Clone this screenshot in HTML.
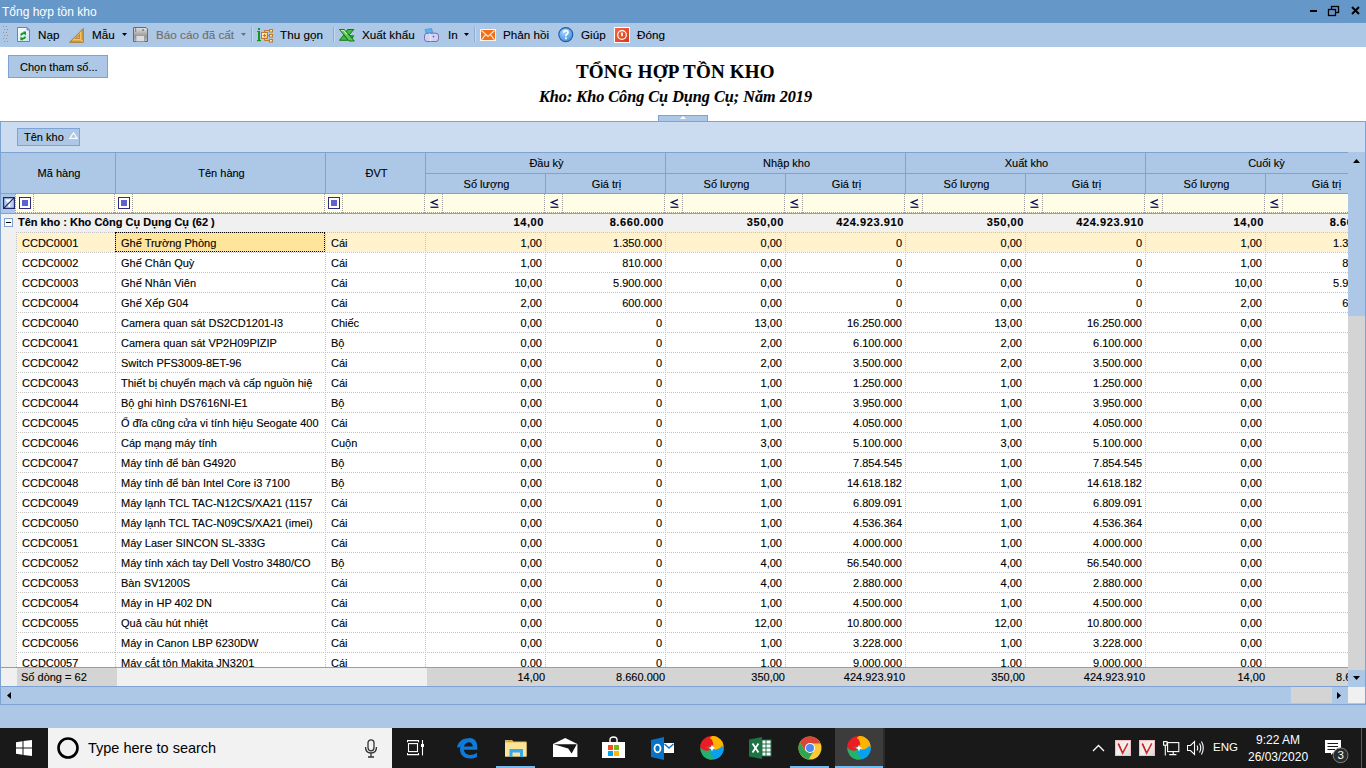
<!DOCTYPE html><html><head><meta charset="utf-8"><style>
*{margin:0;padding:0;box-sizing:border-box}
body{-webkit-text-stroke:0.12px currentColor}
html,body{width:1366px;height:768px;overflow:hidden;background:#adc8e6;font-family:"Liberation Sans",sans-serif;position:relative}
.a{position:absolute}
.t{position:absolute;white-space:nowrap;line-height:1}
#title{left:0;top:0;width:1366px;height:23px;background:#6697c9}
#tool{left:0;top:23px;width:1366px;height:24px;background:#adc8e6}
#white{left:0;top:47px;width:1366px;height:74px;background:#fff}
.tb{font-size:11.7px;color:#000;top:29px}
.tbd{color:#6d6d6d}
.sep{position:absolute;top:27px;width:2px;height:15px;background:#8aaad8;border-right:1px solid #c4d8ee}
#btn{left:8px;top:55px;width:100px;height:23px;background:#adc8e6;border:1px solid #7ea2d2}
#gp{left:0;top:121px;width:1366px;height:31px;background:#cbdcf0;border-top:1px solid #7ea2d2;border-left:1px solid #7ea2d2;border-right:1px solid #7ea2d2}
#chip{left:17px;top:128px;width:63px;height:18px;background:#adc8e6;border:1px solid #7ea2d2}
#hdr{left:0;top:152px;width:1348px;height:42px;background:#adc8e6;border-top:1px solid #7ea2d2;border-bottom:1px solid #7ea2d2;border-left:1px solid #7ea2d2;overflow:hidden}
.vl{position:absolute;width:1px;background:#7ea2d2}
.hl{position:absolute;height:1px;background:#7ea2d2}
.ht{position:absolute;font-size:11px;color:#000;text-align:center;white-space:nowrap;line-height:1;padding-left:3px}
#flt{left:0;top:194px;width:1348px;height:19px;background:#fffde6;overflow:hidden}
#gdata{position:absolute;left:0;top:213px;width:1348px;height:454px;overflow:hidden;background:#f0f0f0;border-top:1px solid #7ea2d2}
.grow{position:absolute;left:0;width:1348px;height:18px;background:#f0f0f0}
.gexp{position:absolute;left:4px;top:4px;width:9px;height:9px;border:1px solid #7ea2d2;background:#fff}
.gexp:after{content:"";position:absolute;left:1px;top:3px;width:5px;height:1px;background:#000}
.gtxt{position:absolute;left:18px;top:3px;font-size:11px;font-weight:bold;color:#000;white-space:nowrap;line-height:1}
.gnum{position:absolute;top:3px;font-size:11px;font-weight:bold;color:#000;text-align:right;padding-right:1px;white-space:nowrap;line-height:1;letter-spacing:0.6px}
.row{position:absolute;left:16px;width:1400px;height:20px;background:#fff}
.row.foc{background:#fff2cc}
.c{position:absolute;top:0;height:20px;font-size:11px;color:#000;white-space:nowrap;overflow:hidden;line-height:1;padding-top:5.5px;
 background-image:linear-gradient(to right,#c2c2c2 50%,transparent 50%),linear-gradient(to bottom,#c2c2c2 50%,transparent 50%);
 background-size:2px 1px,1px 2px;background-repeat:repeat-x,repeat-y;background-position:0 0,0 0}
.c.txt{padding-left:6px}
.c.num{text-align:right;padding-right:3px}
.c.fcell{background-color:#ffe49c;outline:1px dotted #000;outline-offset:-1px}
#foot{left:0;top:667px;width:1348px;height:20px;background:#d4d4d4;border-top:1px solid #7ea2d2;border-bottom:1px solid #7ea2d2;border-left:1px solid #7ea2d2}
#vs{left:1348px;top:152px;width:17px;height:535px;background:#d4d4d4}
#hs{left:0;top:687px;width:1366px;height:18px;background:#adc8e6;border-left:1px solid #7ea2d2;border-right:1px solid #7ea2d2;border-bottom:1px solid #7ea2d2}
#task{left:0;top:728px;width:1366px;height:40px;background:#191919}
#search{left:48px;top:728px;width:344px;height:40px;background:#f2f2f2}
.fd{position:absolute;top:0;width:1px;height:19px;background-image:linear-gradient(to bottom,#9a9a9a 50%,transparent 50%);background-size:1px 2px}
.fdh{position:absolute;left:15px;top:18px;width:1400px;height:1px;background-image:linear-gradient(to right,#9a9a9a 50%,transparent 50%);background-size:2px 1px}
.fle{position:absolute;top:5px}
.fnum{position:absolute;top:4px;font-size:11px;color:#000;text-align:right;padding-right:0px;white-space:nowrap;line-height:1}

.ns{-webkit-text-stroke:0}

</style></head><body>
<div id="title" class="a"></div>
<div class="t ns" style="left:2px;top:6px;font-size:12px;color:#fff">Tổng hợp tồn kho</div>
<div class="a" style="left:1310px;top:10px;width:7px;height:2px;background:#000"></div>
<svg class="a" style="left:1327px;top:5px" width="13" height="12" viewBox="0 0 13 12"><rect x="4.5" y="1.5" width="7" height="6" fill="none" stroke="#000" stroke-width="1.3"/><rect x="1.5" y="4.5" width="7" height="6" fill="#6697c9" stroke="#000" stroke-width="1.3"/></svg>
<svg class="a" style="left:1351px;top:6px" width="9" height="9" viewBox="0 0 9 9"><path d="M1 1L8 8M8 1L1 8" stroke="#000" stroke-width="2"/></svg>

<div id="tool" class="a"></div>
<svg class="a" style="left:3px;top:25px" width="6" height="20" viewBox="0 0 6 20"><g fill="#9a8f86"><rect x="0" y="1" width="1" height="1"/><rect x="3" y="1" width="1" height="1"/><rect x="1" y="4" width="1" height="1"/><rect x="4" y="4" width="1" height="1"/><rect x="0" y="7" width="1" height="1"/><rect x="3" y="7" width="1" height="1"/><rect x="1" y="10" width="1" height="1"/><rect x="4" y="10" width="1" height="1"/><rect x="0" y="13" width="1" height="1"/><rect x="3" y="13" width="1" height="1"/><rect x="1" y="16" width="1" height="1"/><rect x="4" y="16" width="1" height="1"/></g></svg>
<!-- Nap icon -->
<svg class="a" style="left:17px;top:27px" width="13" height="15" viewBox="0 0 13 15"><defs><linearGradient id="ng" x1="0" y1="0" x2="1" y2="1"><stop offset="0" stop-color="#ffffff"/><stop offset="1" stop-color="#c4e2fa"/></linearGradient></defs><path d="M0.5 0.5H10L12.5 3V14.5H0.5Z" fill="url(#ng)" stroke="#767cab"/><path d="M10 0.5V3H12.5" fill="#5aa8e8" stroke="#767cab" stroke-width="0.8"/><g transform="translate(6.3 8.8) scale(0.82) translate(-6.3 -8.8)"><path d="M2.6 8.2C3 5.6 4.6 4.6 7 4.6H7.3L6.3 3.6H9.5V8.4L8.3 7.2C6.8 6.7 5 7 4.4 8.7Z" fill="#0d960d"/><path d="M9.6 10C9.2 12.4 7.8 13.2 5.5 13.2H5.2L6.2 14.2H2.8V9.6L4.1 10.8C5.6 11.3 7.3 11.2 7.9 9.4Z" fill="#0d960d"/></g></svg>
<div class="t tb" style="left:38px">Nạp</div>
<!-- set square -->
<svg class="a" style="left:69px;top:28px" width="15" height="15" viewBox="0 0 15 15"><path d="M0.5 14.3H14.3V0.5Z" fill="#f2c25c" stroke="#a86e28" stroke-width="0.9"/><path d="M5.2 11H11V5.2Z" fill="#c48a3c"/><path d="M8 10H10V8Z" fill="#adc8e6"/><g fill="#9a6420"><rect x="2.5" y="12.6" width="1" height="1.2"/><rect x="4.5" y="12.6" width="1" height="1.2"/><rect x="6.5" y="12.6" width="1" height="1.2"/><rect x="8.5" y="12.6" width="1" height="1.2"/><rect x="10.5" y="12.6" width="1" height="1.2"/><rect x="12.6" y="2.5" width="1.2" height="1"/><rect x="12.6" y="4.5" width="1.2" height="1"/><rect x="12.6" y="6.5" width="1.2" height="1"/><rect x="12.6" y="8.5" width="1.2" height="1"/><rect x="12.6" y="10.5" width="1.2" height="1"/></g></svg>
<div class="t tb" style="left:92px">Mẫu</div>
<svg class="a" style="left:122px;top:33px" width="5" height="3" viewBox="0 0 5 3"><path d="M0 0H5L2.5 3Z" fill="#000"/></svg>
<!-- floppy -->
<svg class="a" style="left:133px;top:27px" width="15" height="15" viewBox="0 0 15 15"><defs><linearGradient id="fg" x1="0" y1="0" x2="0" y2="1"><stop offset="0" stop-color="#e4e4e4"/><stop offset="0.6" stop-color="#9a9a9a"/><stop offset="1" stop-color="#b0b0b0"/></linearGradient></defs><path d="M0.5 0.5H13L14.5 2V14.5H0.5Z" fill="url(#fg)" stroke="#6a6a6a"/><rect x="2" y="1" width="1.2" height="4" fill="#8a8a8a"/><circle cx="10" cy="3" r="1" fill="#7a7a7a"/><rect x="3" y="8.5" width="8.5" height="6" fill="#dcdcdc" stroke="#8a8a8a" stroke-width="0.6"/><circle cx="1.8" cy="13.2" r="0.7" fill="#adc8e6"/><circle cx="12.8" cy="13.2" r="0.7" fill="#adc8e6"/></svg>
<div class="t tb tbd" style="left:156px">Báo cáo đã cất</div>
<svg class="a" style="left:241px;top:33px" width="5" height="3" viewBox="0 0 5 3"><path d="M0 0H5L2.5 3Z" fill="#707070"/></svg>
<div class="sep" style="left:251px"></div>
<!-- thu gon icon -->
<svg class="a" style="left:257px;top:28px" width="16" height="15" viewBox="0 0 16 15"><rect x="1" y="0" width="2" height="2" fill="#159615"/><path d="M0 3H3V12H4V13.2H0V12H1V4H0Z" fill="#159615"/><defs><linearGradient id="tg" x1="0" y1="0" x2="1" y2="1"><stop offset="0" stop-color="#fffbd8"/><stop offset="1" stop-color="#f5c250"/></linearGradient></defs><path d="M7.5 4.5V2.5H12.5M10.5 7.5H12.5M7.5 10.5V12.5H12.5" stroke="#c07a30" fill="none"/><rect x="4.5" y="4.5" width="6" height="6" fill="url(#tg)" stroke="#c07a30"/><path d="M7.5 6V9M6 7.5H9" stroke="#c07a30"/><g fill="#fde7a0" stroke="#c07a30"><rect x="12.5" y="1.5" width="3" height="2.5"/><rect x="12.5" y="6.5" width="3" height="2.5"/><rect x="12.5" y="11.5" width="3" height="2.5"/></g></svg>
<div class="t tb" style="left:280px">Thu gọn</div>
<div class="sep" style="left:333px"></div>
<!-- excel -->
<svg class="a" style="left:339px;top:29px" width="16" height="13" viewBox="0 0 16 13"><g fill="#3cbf3c" stroke="#0b6a0b" stroke-width="0.9" stroke-linejoin="round"><path d="M8.6 0.5H14.8L9.8 6.2L7.2 3.4Z"/><path d="M0.5 11.3L4.6 6.2L7.8 9.4L8.6 11.3Z"/><path d="M10.6 6.8H14.6L13 9.6Z"/><path d="M0.5 0.5H5.3L15.3 12H10Z" fill="#56cc56"/></g><path d="M2 1.5H4.6L8 5.4" stroke="#cff5b0" stroke-width="1.1" fill="none"/></svg>
<div class="t tb" style="left:362px">Xuất khẩu</div>
<!-- printer -->
<svg class="a" style="left:424px;top:28px" width="15" height="14" viewBox="0 0 15 14"><path d="M1 1.5L7.5 0.5L8.8 4.8L2.4 6Z" fill="#58b4f0" stroke="#3a8ad8" stroke-width="0.6"/><path d="M0.5 8Q0.5 5.2 3 5.2H12Q14.5 5.2 14.5 8V10.8Q14.5 13.5 12 13.5H3Q0.5 13.5 0.5 10.8Z" fill="#d2d0f4" stroke="#6c68a8" stroke-width="0.9"/><path d="M5.5 5.5Q7.5 9 6.5 13.3" stroke="#f0f0ff" stroke-width="0.9" fill="none"/><circle cx="9.5" cy="8.6" r="0.8" fill="#55558a"/></svg>
<div class="t tb" style="left:448px">In</div>
<svg class="a" style="left:464px;top:33px" width="5" height="3" viewBox="0 0 5 3"><path d="M0 0H5L2.5 3Z" fill="#000"/></svg>
<div class="sep" style="left:474px"></div>
<!-- mail -->
<svg class="a" style="left:480px;top:29px" width="16" height="12" viewBox="0 0 16 12"><rect x="0" y="0" width="16" height="12" fill="#fff4ea"/><rect x="1" y="1" width="14" height="10" fill="#f26e16"/><path d="M1.5 1.5L8 7.4L14.5 1.5M1.5 10.8L5.6 5.6M14.5 10.8L10.4 5.6" stroke="#fde6d0" stroke-width="1.1" fill="none"/></svg>
<div class="t tb" style="left:503px">Phản hồi</div>
<!-- help -->
<svg class="a" style="left:558px;top:27px" width="16" height="16" viewBox="0 0 16 16"><defs><radialGradient id="hg" cx="0.4" cy="0.3" r="0.8"><stop offset="0" stop-color="#a8d8fc"/><stop offset="1" stop-color="#3a86d8"/></radialGradient></defs><circle cx="7.8" cy="7.6" r="7" fill="url(#hg)" stroke="#1c5ca8" stroke-width="1.1"/><path d="M5.7 5.6Q5.9 3.6 7.9 3.6Q10 3.6 10 5.4Q10 6.6 8.7 7.3Q7.9 7.8 7.9 9.2" stroke="#fff" stroke-width="1.6" fill="none"/><rect x="7" y="10.4" width="1.8" height="1.8" fill="#fff"/></svg>
<div class="t tb" style="left:581px">Giúp</div>
<!-- power -->
<svg class="a" style="left:614px;top:27px" width="16" height="16" viewBox="0 0 16 16"><rect x="0" y="0" width="16" height="16" fill="#fff"/><defs><linearGradient id="pg" x1="0" y1="0" x2="1" y2="1"><stop offset="0" stop-color="#f46848"/><stop offset="1" stop-color="#d83810"/></linearGradient></defs><rect x="1" y="1" width="14" height="14" fill="url(#pg)"/><circle cx="8" cy="8" r="4.3" fill="none" stroke="#fff" stroke-width="1.2"/><rect x="7.1" y="5.6" width="1.8" height="3.6" fill="#fff"/></svg>
<div class="t tb" style="left:637px">Đóng</div>

<div id="white" class="a"></div>
<div id="btn" class="a"></div>
<div class="t" style="left:20px;top:62px;font-size:11px;color:#000">Chọn tham số...</div>
<div class="t" style="left:576px;top:61px;font:bold 19px 'Liberation Serif';letter-spacing:0.2px;color:#000">TỔNG HỢP TỒN KHO</div>
<div class="t" style="left:539px;top:88px;font:italic bold 16.2px 'Liberation Serif';color:#000">Kho: Kho Công Cụ Dụng Cụ; Năm 2019</div>

<div id="gp" class="a"></div>
<div class="a" style="left:658px;top:115px;width:50px;height:7px;background:#adc8e6;border:1px solid #7ea2d2"></div>
<svg class="a" style="left:680px;top:116px" width="6" height="3" viewBox="0 0 6 3"><path d="M0 3L3 0L6 3Z" fill="#fff"/></svg>
<div id="chip" class="a"></div>
<div class="t" style="left:24px;top:132px;font-size:11px;color:#000">Tên kho</div>
<svg class="a" style="left:69px;top:132px" width="9" height="7" viewBox="0 0 9 7"><path d="M4.5 0.8L8.2 6.4H0.8Z" fill="none" stroke="#fff" stroke-width="1.1"/></svg>

<div id="hdr" class="a">
 <div class="vl" style="left:114px;top:0;height:41px"></div>
 <div class="vl" style="left:324px;top:0;height:41px"></div>
 <div class="vl" style="left:424px;top:0;height:41px"></div>
 <div class="vl" style="left:664px;top:0;height:41px"></div>
 <div class="vl" style="left:904px;top:0;height:41px"></div>
 <div class="vl" style="left:1144px;top:0;height:41px"></div>
 <div class="vl" style="left:544px;top:20px;height:21px"></div>
 <div class="vl" style="left:784px;top:20px;height:21px"></div>
 <div class="vl" style="left:1024px;top:20px;height:21px"></div>
 <div class="vl" style="left:1264px;top:20px;height:21px"></div>
 <div class="hl" style="left:424px;top:20px;width:1000px"></div>
 <div class="ht" style="left:-1px;top:15px;width:115px">Mã hàng</div>
 <div class="ht" style="left:114px;top:15px;width:210px">Tên hàng</div>
 <div class="ht" style="left:324px;top:15px;width:100px">ĐVT</div>
 <div class="ht" style="left:424px;top:5px;width:240px">Đầu kỳ</div>
 <div class="ht" style="left:664px;top:5px;width:240px">Nhập kho</div>
 <div class="ht" style="left:904px;top:5px;width:240px">Xuất kho</div>
 <div class="ht" style="left:1144px;top:5px;width:240px">Cuối kỳ</div>
 <div class="ht" style="left:424px;top:26px;width:120px">Số lượng</div>
 <div class="ht" style="left:544px;top:26px;width:120px">Giá trị</div>
 <div class="ht" style="left:664px;top:26px;width:120px">Số lượng</div>
 <div class="ht" style="left:784px;top:26px;width:120px">Giá trị</div>
 <div class="ht" style="left:904px;top:26px;width:120px">Số lượng</div>
 <div class="ht" style="left:1024px;top:26px;width:120px">Giá trị</div>
 <div class="ht" style="left:1144px;top:26px;width:120px">Số lượng</div>
 <div class="ht" style="left:1264px;top:26px;width:120px">Giá trị</div>
</div>

<div id="gdata">
<div class="grow" style="top:0px">
<div class="gexp"></div><div class="gtxt">Tên kho : Kho Công Cụ Dụng Cụ (62 )</div>
<div class="gnum" style="left:425px;width:120px">14,00</div>
<div class="gnum" style="left:545px;width:120px">8.660.000</div>
<div class="gnum" style="left:665px;width:120px">350,00</div>
<div class="gnum" style="left:785px;width:120px">424.923.910</div>
<div class="gnum" style="left:905px;width:120px">350,00</div>
<div class="gnum" style="left:1025px;width:120px">424.923.910</div>
<div class="gnum" style="left:1145px;width:120px">14,00</div>
<div class="gnum" style="left:1265px;width:120px">8.660.000</div>
</div>
<div class="row foc" style="top:18px">
<div class="c txt" style="left:0px;width:99px">CCDC0001</div>
<div class="c txt fcell" style="left:99px;width:210px">Ghế Trường Phòng</div>
<div class="c txt" style="left:309px;width:100px">Cái</div>
<div class="c num" style="left:409px;width:120px">1,00</div>
<div class="c num" style="left:529px;width:120px">1.350.000</div>
<div class="c num" style="left:649px;width:120px">0,00</div>
<div class="c num" style="left:769px;width:120px">0</div>
<div class="c num" style="left:889px;width:120px">0,00</div>
<div class="c num" style="left:1009px;width:120px">0</div>
<div class="c num" style="left:1129px;width:120px">1,00</div>
<div class="c num" style="left:1249px;width:120px">1.350.000</div>
</div>
<div class="row" style="top:38px">
<div class="c txt" style="left:0px;width:99px">CCDC0002</div>
<div class="c txt" style="left:99px;width:210px">Ghế Chân Quỳ</div>
<div class="c txt" style="left:309px;width:100px">Cái</div>
<div class="c num" style="left:409px;width:120px">1,00</div>
<div class="c num" style="left:529px;width:120px">810.000</div>
<div class="c num" style="left:649px;width:120px">0,00</div>
<div class="c num" style="left:769px;width:120px">0</div>
<div class="c num" style="left:889px;width:120px">0,00</div>
<div class="c num" style="left:1009px;width:120px">0</div>
<div class="c num" style="left:1129px;width:120px">1,00</div>
<div class="c num" style="left:1249px;width:120px">810.000</div>
</div>
<div class="row" style="top:58px">
<div class="c txt" style="left:0px;width:99px">CCDC0003</div>
<div class="c txt" style="left:99px;width:210px">Ghế Nhân Viên</div>
<div class="c txt" style="left:309px;width:100px">Cái</div>
<div class="c num" style="left:409px;width:120px">10,00</div>
<div class="c num" style="left:529px;width:120px">5.900.000</div>
<div class="c num" style="left:649px;width:120px">0,00</div>
<div class="c num" style="left:769px;width:120px">0</div>
<div class="c num" style="left:889px;width:120px">0,00</div>
<div class="c num" style="left:1009px;width:120px">0</div>
<div class="c num" style="left:1129px;width:120px">10,00</div>
<div class="c num" style="left:1249px;width:120px">5.900.000</div>
</div>
<div class="row" style="top:78px">
<div class="c txt" style="left:0px;width:99px">CCDC0004</div>
<div class="c txt" style="left:99px;width:210px">Ghế Xếp G04</div>
<div class="c txt" style="left:309px;width:100px">Cái</div>
<div class="c num" style="left:409px;width:120px">2,00</div>
<div class="c num" style="left:529px;width:120px">600.000</div>
<div class="c num" style="left:649px;width:120px">0,00</div>
<div class="c num" style="left:769px;width:120px">0</div>
<div class="c num" style="left:889px;width:120px">0,00</div>
<div class="c num" style="left:1009px;width:120px">0</div>
<div class="c num" style="left:1129px;width:120px">2,00</div>
<div class="c num" style="left:1249px;width:120px">600.000</div>
</div>
<div class="row" style="top:98px">
<div class="c txt" style="left:0px;width:99px">CCDC0040</div>
<div class="c txt" style="left:99px;width:210px">Camera quan sát DS2CD1201-I3</div>
<div class="c txt" style="left:309px;width:100px">Chiếc</div>
<div class="c num" style="left:409px;width:120px">0,00</div>
<div class="c num" style="left:529px;width:120px">0</div>
<div class="c num" style="left:649px;width:120px">13,00</div>
<div class="c num" style="left:769px;width:120px">16.250.000</div>
<div class="c num" style="left:889px;width:120px">13,00</div>
<div class="c num" style="left:1009px;width:120px">16.250.000</div>
<div class="c num" style="left:1129px;width:120px">0,00</div>
<div class="c num" style="left:1249px;width:120px">0</div>
</div>
<div class="row" style="top:118px">
<div class="c txt" style="left:0px;width:99px">CCDC0041</div>
<div class="c txt" style="left:99px;width:210px">Camera quan sát VP2H09PIZIP</div>
<div class="c txt" style="left:309px;width:100px">Bộ</div>
<div class="c num" style="left:409px;width:120px">0,00</div>
<div class="c num" style="left:529px;width:120px">0</div>
<div class="c num" style="left:649px;width:120px">2,00</div>
<div class="c num" style="left:769px;width:120px">6.100.000</div>
<div class="c num" style="left:889px;width:120px">2,00</div>
<div class="c num" style="left:1009px;width:120px">6.100.000</div>
<div class="c num" style="left:1129px;width:120px">0,00</div>
<div class="c num" style="left:1249px;width:120px">0</div>
</div>
<div class="row" style="top:138px">
<div class="c txt" style="left:0px;width:99px">CCDC0042</div>
<div class="c txt" style="left:99px;width:210px">Switch PFS3009-8ET-96</div>
<div class="c txt" style="left:309px;width:100px">Cái</div>
<div class="c num" style="left:409px;width:120px">0,00</div>
<div class="c num" style="left:529px;width:120px">0</div>
<div class="c num" style="left:649px;width:120px">2,00</div>
<div class="c num" style="left:769px;width:120px">3.500.000</div>
<div class="c num" style="left:889px;width:120px">2,00</div>
<div class="c num" style="left:1009px;width:120px">3.500.000</div>
<div class="c num" style="left:1129px;width:120px">0,00</div>
<div class="c num" style="left:1249px;width:120px">0</div>
</div>
<div class="row" style="top:158px">
<div class="c txt" style="left:0px;width:99px">CCDC0043</div>
<div class="c txt" style="left:99px;width:210px">Thiết bị chuyển mạch và cấp nguồn hiệ</div>
<div class="c txt" style="left:309px;width:100px">Cái</div>
<div class="c num" style="left:409px;width:120px">0,00</div>
<div class="c num" style="left:529px;width:120px">0</div>
<div class="c num" style="left:649px;width:120px">1,00</div>
<div class="c num" style="left:769px;width:120px">1.250.000</div>
<div class="c num" style="left:889px;width:120px">1,00</div>
<div class="c num" style="left:1009px;width:120px">1.250.000</div>
<div class="c num" style="left:1129px;width:120px">0,00</div>
<div class="c num" style="left:1249px;width:120px">0</div>
</div>
<div class="row" style="top:178px">
<div class="c txt" style="left:0px;width:99px">CCDC0044</div>
<div class="c txt" style="left:99px;width:210px">Bộ ghi hình DS7616NI-E1</div>
<div class="c txt" style="left:309px;width:100px">Bộ</div>
<div class="c num" style="left:409px;width:120px">0,00</div>
<div class="c num" style="left:529px;width:120px">0</div>
<div class="c num" style="left:649px;width:120px">1,00</div>
<div class="c num" style="left:769px;width:120px">3.950.000</div>
<div class="c num" style="left:889px;width:120px">1,00</div>
<div class="c num" style="left:1009px;width:120px">3.950.000</div>
<div class="c num" style="left:1129px;width:120px">0,00</div>
<div class="c num" style="left:1249px;width:120px">0</div>
</div>
<div class="row" style="top:198px">
<div class="c txt" style="left:0px;width:99px">CCDC0045</div>
<div class="c txt" style="left:99px;width:210px">Ổ đĩa cũng cửa vi tính hiệu Seogate 400</div>
<div class="c txt" style="left:309px;width:100px">Cái</div>
<div class="c num" style="left:409px;width:120px">0,00</div>
<div class="c num" style="left:529px;width:120px">0</div>
<div class="c num" style="left:649px;width:120px">1,00</div>
<div class="c num" style="left:769px;width:120px">4.050.000</div>
<div class="c num" style="left:889px;width:120px">1,00</div>
<div class="c num" style="left:1009px;width:120px">4.050.000</div>
<div class="c num" style="left:1129px;width:120px">0,00</div>
<div class="c num" style="left:1249px;width:120px">0</div>
</div>
<div class="row" style="top:218px">
<div class="c txt" style="left:0px;width:99px">CCDC0046</div>
<div class="c txt" style="left:99px;width:210px">Cáp mạng máy tính</div>
<div class="c txt" style="left:309px;width:100px">Cuộn</div>
<div class="c num" style="left:409px;width:120px">0,00</div>
<div class="c num" style="left:529px;width:120px">0</div>
<div class="c num" style="left:649px;width:120px">3,00</div>
<div class="c num" style="left:769px;width:120px">5.100.000</div>
<div class="c num" style="left:889px;width:120px">3,00</div>
<div class="c num" style="left:1009px;width:120px">5.100.000</div>
<div class="c num" style="left:1129px;width:120px">0,00</div>
<div class="c num" style="left:1249px;width:120px">0</div>
</div>
<div class="row" style="top:238px">
<div class="c txt" style="left:0px;width:99px">CCDC0047</div>
<div class="c txt" style="left:99px;width:210px">Máy tính để bàn G4920</div>
<div class="c txt" style="left:309px;width:100px">Bộ</div>
<div class="c num" style="left:409px;width:120px">0,00</div>
<div class="c num" style="left:529px;width:120px">0</div>
<div class="c num" style="left:649px;width:120px">1,00</div>
<div class="c num" style="left:769px;width:120px">7.854.545</div>
<div class="c num" style="left:889px;width:120px">1,00</div>
<div class="c num" style="left:1009px;width:120px">7.854.545</div>
<div class="c num" style="left:1129px;width:120px">0,00</div>
<div class="c num" style="left:1249px;width:120px">0</div>
</div>
<div class="row" style="top:258px">
<div class="c txt" style="left:0px;width:99px">CCDC0048</div>
<div class="c txt" style="left:99px;width:210px">Máy tính để bàn Intel Core i3 7100</div>
<div class="c txt" style="left:309px;width:100px">Bộ</div>
<div class="c num" style="left:409px;width:120px">0,00</div>
<div class="c num" style="left:529px;width:120px">0</div>
<div class="c num" style="left:649px;width:120px">1,00</div>
<div class="c num" style="left:769px;width:120px">14.618.182</div>
<div class="c num" style="left:889px;width:120px">1,00</div>
<div class="c num" style="left:1009px;width:120px">14.618.182</div>
<div class="c num" style="left:1129px;width:120px">0,00</div>
<div class="c num" style="left:1249px;width:120px">0</div>
</div>
<div class="row" style="top:278px">
<div class="c txt" style="left:0px;width:99px">CCDC0049</div>
<div class="c txt" style="left:99px;width:210px">Máy lạnh TCL TAC-N12CS/XA21 (1157</div>
<div class="c txt" style="left:309px;width:100px">Cái</div>
<div class="c num" style="left:409px;width:120px">0,00</div>
<div class="c num" style="left:529px;width:120px">0</div>
<div class="c num" style="left:649px;width:120px">1,00</div>
<div class="c num" style="left:769px;width:120px">6.809.091</div>
<div class="c num" style="left:889px;width:120px">1,00</div>
<div class="c num" style="left:1009px;width:120px">6.809.091</div>
<div class="c num" style="left:1129px;width:120px">0,00</div>
<div class="c num" style="left:1249px;width:120px">0</div>
</div>
<div class="row" style="top:298px">
<div class="c txt" style="left:0px;width:99px">CCDC0050</div>
<div class="c txt" style="left:99px;width:210px">Máy lạnh TCL TAC-N09CS/XA21 (imei)</div>
<div class="c txt" style="left:309px;width:100px">Cái</div>
<div class="c num" style="left:409px;width:120px">0,00</div>
<div class="c num" style="left:529px;width:120px">0</div>
<div class="c num" style="left:649px;width:120px">1,00</div>
<div class="c num" style="left:769px;width:120px">4.536.364</div>
<div class="c num" style="left:889px;width:120px">1,00</div>
<div class="c num" style="left:1009px;width:120px">4.536.364</div>
<div class="c num" style="left:1129px;width:120px">0,00</div>
<div class="c num" style="left:1249px;width:120px">0</div>
</div>
<div class="row" style="top:318px">
<div class="c txt" style="left:0px;width:99px">CCDC0051</div>
<div class="c txt" style="left:99px;width:210px">Máy Laser SINCON SL-333G</div>
<div class="c txt" style="left:309px;width:100px">Cái</div>
<div class="c num" style="left:409px;width:120px">0,00</div>
<div class="c num" style="left:529px;width:120px">0</div>
<div class="c num" style="left:649px;width:120px">1,00</div>
<div class="c num" style="left:769px;width:120px">4.000.000</div>
<div class="c num" style="left:889px;width:120px">1,00</div>
<div class="c num" style="left:1009px;width:120px">4.000.000</div>
<div class="c num" style="left:1129px;width:120px">0,00</div>
<div class="c num" style="left:1249px;width:120px">0</div>
</div>
<div class="row" style="top:338px">
<div class="c txt" style="left:0px;width:99px">CCDC0052</div>
<div class="c txt" style="left:99px;width:210px">Máy tính xách tay Dell Vostro 3480/CO</div>
<div class="c txt" style="left:309px;width:100px">Bộ</div>
<div class="c num" style="left:409px;width:120px">0,00</div>
<div class="c num" style="left:529px;width:120px">0</div>
<div class="c num" style="left:649px;width:120px">4,00</div>
<div class="c num" style="left:769px;width:120px">56.540.000</div>
<div class="c num" style="left:889px;width:120px">4,00</div>
<div class="c num" style="left:1009px;width:120px">56.540.000</div>
<div class="c num" style="left:1129px;width:120px">0,00</div>
<div class="c num" style="left:1249px;width:120px">0</div>
</div>
<div class="row" style="top:358px">
<div class="c txt" style="left:0px;width:99px">CCDC0053</div>
<div class="c txt" style="left:99px;width:210px">Bàn SV1200S</div>
<div class="c txt" style="left:309px;width:100px">Cái</div>
<div class="c num" style="left:409px;width:120px">0,00</div>
<div class="c num" style="left:529px;width:120px">0</div>
<div class="c num" style="left:649px;width:120px">4,00</div>
<div class="c num" style="left:769px;width:120px">2.880.000</div>
<div class="c num" style="left:889px;width:120px">4,00</div>
<div class="c num" style="left:1009px;width:120px">2.880.000</div>
<div class="c num" style="left:1129px;width:120px">0,00</div>
<div class="c num" style="left:1249px;width:120px">0</div>
</div>
<div class="row" style="top:378px">
<div class="c txt" style="left:0px;width:99px">CCDC0054</div>
<div class="c txt" style="left:99px;width:210px">Máy in HP 402 DN</div>
<div class="c txt" style="left:309px;width:100px">Cái</div>
<div class="c num" style="left:409px;width:120px">0,00</div>
<div class="c num" style="left:529px;width:120px">0</div>
<div class="c num" style="left:649px;width:120px">1,00</div>
<div class="c num" style="left:769px;width:120px">4.500.000</div>
<div class="c num" style="left:889px;width:120px">1,00</div>
<div class="c num" style="left:1009px;width:120px">4.500.000</div>
<div class="c num" style="left:1129px;width:120px">0,00</div>
<div class="c num" style="left:1249px;width:120px">0</div>
</div>
<div class="row" style="top:398px">
<div class="c txt" style="left:0px;width:99px">CCDC0055</div>
<div class="c txt" style="left:99px;width:210px">Quả cầu hút nhiệt</div>
<div class="c txt" style="left:309px;width:100px">Cái</div>
<div class="c num" style="left:409px;width:120px">0,00</div>
<div class="c num" style="left:529px;width:120px">0</div>
<div class="c num" style="left:649px;width:120px">12,00</div>
<div class="c num" style="left:769px;width:120px">10.800.000</div>
<div class="c num" style="left:889px;width:120px">12,00</div>
<div class="c num" style="left:1009px;width:120px">10.800.000</div>
<div class="c num" style="left:1129px;width:120px">0,00</div>
<div class="c num" style="left:1249px;width:120px">0</div>
</div>
<div class="row" style="top:418px">
<div class="c txt" style="left:0px;width:99px">CCDC0056</div>
<div class="c txt" style="left:99px;width:210px">Máy in Canon LBP 6230DW</div>
<div class="c txt" style="left:309px;width:100px">Cái</div>
<div class="c num" style="left:409px;width:120px">0,00</div>
<div class="c num" style="left:529px;width:120px">0</div>
<div class="c num" style="left:649px;width:120px">1,00</div>
<div class="c num" style="left:769px;width:120px">3.228.000</div>
<div class="c num" style="left:889px;width:120px">1,00</div>
<div class="c num" style="left:1009px;width:120px">3.228.000</div>
<div class="c num" style="left:1129px;width:120px">0,00</div>
<div class="c num" style="left:1249px;width:120px">0</div>
</div>
<div class="row" style="top:438px">
<div class="c txt" style="left:0px;width:99px">CCDC0057</div>
<div class="c txt" style="left:99px;width:210px">Máy cắt tôn Makita JN3201</div>
<div class="c txt" style="left:309px;width:100px">Cái</div>
<div class="c num" style="left:409px;width:120px">0,00</div>
<div class="c num" style="left:529px;width:120px">0</div>
<div class="c num" style="left:649px;width:120px">1,00</div>
<div class="c num" style="left:769px;width:120px">9.000.000</div>
<div class="c num" style="left:889px;width:120px">1,00</div>
<div class="c num" style="left:1009px;width:120px">9.000.000</div>
<div class="c num" style="left:1129px;width:120px">0,00</div>
<div class="c num" style="left:1249px;width:120px">0</div>
</div>
</div>
<div id="flt" class="a">
 <div class="a" style="left:1px;top:0;width:14px;height:19px;background:#adc8e6"></div>
 <svg class="a" style="left:3px;top:3px" width="12" height="12" viewBox="0 0 12 12"><rect x="0.6" y="0.6" width="10.8" height="10.8" fill="#b4cdf0" stroke="#262670" stroke-width="1.2"/><path d="M2.2 2.6H10.6L7.2 6.4V10.6L5.2 9.2V6.4Z" fill="#fff"/><path d="M1 11L11 1" stroke="#262670" stroke-width="1.1"/></svg>
 <svg class="a" style="left:19px;top:3px" width="12" height="12" viewBox="0 0 12 12"><rect x="0.5" y="0.5" width="11" height="11" fill="#fff" stroke="#2e2e80"/><rect x="3" y="3" width="6" height="6" fill="#6060d0"/></svg>
 <svg class="a" style="left:118px;top:3px" width="12" height="12" viewBox="0 0 12 12"><rect x="0.5" y="0.5" width="11" height="11" fill="#fff" stroke="#2e2e80"/><rect x="3" y="3" width="6" height="6" fill="#6060d0"/></svg>
 <svg class="a" style="left:328px;top:3px" width="12" height="12" viewBox="0 0 12 12"><rect x="0.5" y="0.5" width="11" height="11" fill="#fff" stroke="#2e2e80"/><rect x="3" y="3" width="6" height="6" fill="#6060d0"/></svg>
 <div class="fd" style="left:424px"></div><div class="fd" style="left:442px"></div><svg class="fle" style="left:430px" width="9" height="9" viewBox="0 0 9 9"><path d="M8 0.7L1.3 3.4L8 6.1" fill="none" stroke="#10105a" stroke-width="1.3"/><rect x="0.5" y="7.6" width="8" height="1.3" fill="#10105a"/></svg><div class="fd" style="left:544px"></div><div class="fd" style="left:562px"></div><svg class="fle" style="left:550px" width="9" height="9" viewBox="0 0 9 9"><path d="M8 0.7L1.3 3.4L8 6.1" fill="none" stroke="#10105a" stroke-width="1.3"/><rect x="0.5" y="7.6" width="8" height="1.3" fill="#10105a"/></svg><div class="fd" style="left:664px"></div><div class="fd" style="left:682px"></div><svg class="fle" style="left:670px" width="9" height="9" viewBox="0 0 9 9"><path d="M8 0.7L1.3 3.4L8 6.1" fill="none" stroke="#10105a" stroke-width="1.3"/><rect x="0.5" y="7.6" width="8" height="1.3" fill="#10105a"/></svg><div class="fd" style="left:784px"></div><div class="fd" style="left:802px"></div><svg class="fle" style="left:790px" width="9" height="9" viewBox="0 0 9 9"><path d="M8 0.7L1.3 3.4L8 6.1" fill="none" stroke="#10105a" stroke-width="1.3"/><rect x="0.5" y="7.6" width="8" height="1.3" fill="#10105a"/></svg><div class="fd" style="left:904px"></div><div class="fd" style="left:922px"></div><svg class="fle" style="left:910px" width="9" height="9" viewBox="0 0 9 9"><path d="M8 0.7L1.3 3.4L8 6.1" fill="none" stroke="#10105a" stroke-width="1.3"/><rect x="0.5" y="7.6" width="8" height="1.3" fill="#10105a"/></svg><div class="fd" style="left:1024px"></div><div class="fd" style="left:1042px"></div><svg class="fle" style="left:1030px" width="9" height="9" viewBox="0 0 9 9"><path d="M8 0.7L1.3 3.4L8 6.1" fill="none" stroke="#10105a" stroke-width="1.3"/><rect x="0.5" y="7.6" width="8" height="1.3" fill="#10105a"/></svg><div class="fd" style="left:1144px"></div><div class="fd" style="left:1162px"></div><svg class="fle" style="left:1150px" width="9" height="9" viewBox="0 0 9 9"><path d="M8 0.7L1.3 3.4L8 6.1" fill="none" stroke="#10105a" stroke-width="1.3"/><rect x="0.5" y="7.6" width="8" height="1.3" fill="#10105a"/></svg><div class="fd" style="left:1264px"></div><div class="fd" style="left:1282px"></div><svg class="fle" style="left:1270px" width="9" height="9" viewBox="0 0 9 9"><path d="M8 0.7L1.3 3.4L8 6.1" fill="none" stroke="#10105a" stroke-width="1.3"/><rect x="0.5" y="7.6" width="8" height="1.3" fill="#10105a"/></svg><div class="fd" style="left:33px"></div><div class="fd" style="left:132px"></div><div class="fd" style="left:114px"></div><div class="fd" style="left:342px"></div><div class="fd" style="left:324px"></div><div class="fd" style="left:15px"></div><div class="fdh"></div>
</div>

<div id="foot" class="a">
 <div class="a" style="left:0;top:0;width:16px;height:18px;background:#f0f0f0"></div>
 <div class="a" style="left:116px;top:0;width:310px;height:18px;background:#f0f0f0"></div>
 <div class="t" style="left:20px;top:4px;font-size:11px;color:#000">Số dòng = 62</div>
 <div class="fnum" style="left:424px;width:120px">14,00</div><div class="fnum" style="left:544px;width:120px">8.660.000</div><div class="fnum" style="left:664px;width:120px">350,00</div><div class="fnum" style="left:784px;width:120px">424.923.910</div><div class="fnum" style="left:904px;width:120px">350,00</div><div class="fnum" style="left:1024px;width:120px">424.923.910</div><div class="fnum" style="left:1144px;width:120px">14,00</div><div class="fnum" style="left:1264px;width:120px">8.660.000</div>
</div>
<div id="vs" class="a">
 <div class="a" style="left:0;top:0;width:17px;height:164px;background:#adc8e6"></div>
 <svg class="a" style="left:5px;top:7px" width="7" height="4" viewBox="0 0 7 4"><path d="M0 4L3.5 0L7 4Z" fill="#000"/></svg>
 <div class="a" style="left:0;top:518px;width:17px;height:17px;background:#adc8e6"></div>
 <svg class="a" style="left:5px;top:524px" width="7" height="4" viewBox="0 0 7 4"><path d="M0 0L3.5 4L7 0Z" fill="#000"/></svg>
</div>
<div class="a" style="left:1365px;top:121px;width:1px;height:583px;background:#7ea2d2"></div>
<div class="a" style="left:0;top:121px;width:1px;height:583px;background:#7ea2d2"></div>
<div id="hs" class="a">
 <div class="a" style="left:1290px;top:0;width:41px;height:16px;background:#d4d4d4"></div>
 <div class="a" style="left:1347px;top:0;width:17px;height:16px;background:#f0f0f0"></div>
 <svg class="a" style="left:6px;top:5px" width="4" height="7" viewBox="0 0 4 7"><path d="M4 0L0 3.5L4 7Z" fill="#000"/></svg>
 <svg class="a" style="left:1336px;top:5px" width="4" height="7" viewBox="0 0 4 7"><path d="M0 0L4 3.5L0 7Z" fill="#000"/></svg>
</div>

<div id="task" class="a"></div>
<svg class="a" style="left:16px;top:740px" width="16" height="16" viewBox="0 0 16 16"><path d="M0 2.2L6.5 1.3V7.5H0ZM7.5 1.1L16 0V7.5H7.5ZM0 8.5H6.5V14.7L0 13.8ZM7.5 8.5H16V16L7.5 14.9Z" fill="#fff"/></svg>
<div id="search" class="a"></div>
<svg class="a" style="left:56px;top:736px" width="24" height="24" viewBox="0 0 24 24"><circle cx="12" cy="12" r="9.5" fill="none" stroke="#000" stroke-width="2.6"/></svg>
<div class="t ns" style="left:88px;top:741px;font-size:14.5px;color:#000">Type here to search</div>
<svg class="a" style="left:364px;top:739px" width="14" height="19" viewBox="0 0 14 19"><rect x="4" y="0.8" width="6" height="11" rx="3" fill="none" stroke="#333" stroke-width="1.3"/><path d="M1.5 8Q1.5 14 7 14Q12.5 14 12.5 8M7 14V18M4 18H10" fill="none" stroke="#333" stroke-width="1.3"/></svg>
<!-- task view -->
<svg class="a" style="left:407px;top:740px" width="18" height="16" viewBox="0 0 18 16"><g fill="none" stroke="#fff" stroke-width="1.1"><path d="M0.5 2.2V0.6H11.5V2.2M0.5 13V14.6H11.5V13"/><rect x="1.5" y="3.6" width="9" height="8"/><path d="M15.5 0V15.5"/></g><rect x="14" y="4" width="3" height="3" fill="#fff"/></svg>
<!-- edge -->
<svg class="a" style="left:457px;top:737px" width="21" height="22" viewBox="0 0 21 22"><path fill-rule="evenodd" d="M20 12.8H6.8C7.3 16.2 9.8 18 13 18C15.5 18 17.7 17.2 20 15.8V19.9C17.8 21 15.4 21.5 12.8 21.5C6.6 21.5 3 17.3 3 12.2C3 6.2 7.5 1 13 1C17.5 1 20.3 4.6 20.3 9.6V12.8ZM6.9 9.6H15.8C15.6 7 14.1 5.2 11.8 5.2C9.5 5.2 7.6 7 6.9 9.6Z" fill="#0f7ad8"/><path d="M0 10.5C1.2 5 5.2 1.5 10.5 1.2C7 2.8 4.3 5.8 3.3 10Z" fill="#0f7ad8"/></svg>
<!-- explorer -->
<svg class="a" style="left:505px;top:739px" width="22" height="18" viewBox="0 0 22 18"><path d="M0 1H7L8.5 2.5H21.5V17.5H0Z" fill="#e9bd4c"/><rect x="0" y="3.5" width="21.5" height="14" fill="#fce39c"/><rect x="1" y="1.2" width="5.5" height="1.6" fill="#c9a23a"/><rect x="1.5" y="1.4" width="1.4" height="1.2" fill="#7fe0f0"/><path d="M4.5 10H18V18H15V13.5H7.5V18H4.5Z" fill="#36a9e8"/></svg>
<div class="a" style="left:496px;top:766px;width:39px;height:2px;background:#76b9ed"></div>
<!-- mail -->
<svg class="a" style="left:553px;top:738px" width="25" height="19" viewBox="0 0 25 19"><path d="M0 6L12.2 0L24.4 6V19H0Z" fill="#fff"/><path d="M0.6 6.2H23.8L18.6 15.4L15.2 10.6Z" fill="#161616"/></svg>
<!-- store -->
<svg class="a" style="left:602px;top:736px" width="23" height="23" viewBox="0 0 23 23"><path d="M8 6V4Q8 1 11.5 1Q15 1 15 4V6" fill="none" stroke="#fff" stroke-width="1.4"/><path d="M0 6H23V22H0Z" fill="#fff"/><rect x="6" y="9" width="5" height="5" fill="#f25022"/><rect x="12" y="9" width="5" height="5" fill="#7fba00"/><rect x="6" y="15" width="5" height="5" fill="#00a4ef"/><rect x="12" y="15" width="5" height="5" fill="#ffb900"/></svg>
<!-- outlook -->
<svg class="a" style="left:651px;top:737px" width="24" height="23" viewBox="0 0 24 23"><path d="M0 3L13 0V23L0 20Z" fill="#0a72c4"/><rect x="13" y="6" width="10" height="10" fill="#fff"/><path d="M13.5 7L18 11L22.5 7" stroke="#0a72c4" stroke-width="1.4" fill="none"/><ellipse cx="6.5" cy="11.5" rx="3" ry="3.8" fill="none" stroke="#fff" stroke-width="1.8"/></svg>
<!-- app colorful -->
<svg class="a" style="left:700px;top:735px" width="24" height="25" viewBox="0 0 24 25"><defs><clipPath id="ac"><circle cx="12" cy="12.8" r="11.8"/></clipPath><clipPath id="atop"><rect x="0" y="0" width="12" height="12.5"/></clipPath><g id="appg"><g clip-path="url(#ac)"><path d="M0 0H12V12.8H0Z" fill="#ec1c24"/><path d="M12 0H24V12.8H12Z" fill="#fdb300"/><path d="M12 12.8H24V25H12Z" fill="#0aa0f0"/><path d="M0 12.8H12V25H0Z" fill="#23b26d"/><circle cx="9" cy="18.5" r="7" fill="#23b26d"/><circle cx="17.5" cy="16.5" r="7" fill="#0aa0f0"/><circle cx="15.5" cy="7.5" r="7.2" fill="#fdb300"/><circle cx="6.5" cy="9" r="6.8" fill="#ec1c24"/><g clip-path="url(#atop)"><circle cx="9" cy="18.5" r="7" fill="#23b26d"/></g></g><path d="M12 9.5L13 12L15.5 13L13 14L12 16.5L11 14L8.5 13L11 12Z" fill="#fff"/></g></defs><use href="#appg"/></svg>
<!-- excel -->
<svg class="a" style="left:749px;top:737px" width="23" height="22" viewBox="0 0 23 22"><path d="M0 2.5L13 0V22L0 19.5Z" fill="#1d7344"/><rect x="13" y="3" width="9" height="16" fill="#fff" stroke="#1d7344" stroke-width="1"/><path d="M13 7H22M13 11H22M13 15H22M17 3V19" stroke="#1d7344" stroke-width="1"/><path d="M3.5 6.5L9.5 15.5M9.5 6.5L3.5 15.5" stroke="#fff" stroke-width="1.8"/></svg>
<!-- chrome -->
<svg class="a" style="left:798px;top:736px" width="24" height="24" viewBox="0 0 24 24"><circle cx="12" cy="12" r="11.5" fill="#fcc934"/><path d="M12 0.5A11.5 11.5 0 0 0 2 6.3L6.8 14.6L12 7.5H22.3A11.5 11.5 0 0 0 12 0.5Z" fill="#db4437"/><path d="M2 6.3A11.5 11.5 0 0 0 10.5 23.4L15.5 15.2L6.8 14.6Z" fill="#2ea553"/><circle cx="12" cy="12" r="5" fill="#fff"/><circle cx="12" cy="12" r="4" fill="#4a8af4"/></svg>
<div class="a" style="left:790px;top:766px;width:39px;height:2px;background:#76b9ed"></div>
<!-- active app -->
<div class="a" style="left:835px;top:728px;width:48px;height:40px;background:#3c3c3c"></div>
<div class="a" style="left:883px;top:728px;width:2px;height:40px;background:#2a2a2a"></div>
<svg class="a" style="left:847px;top:735px" width="24" height="25" viewBox="0 0 24 25"><use href="#appg"/></svg>
<div class="a" style="left:835px;top:766px;width:48px;height:2px;background:#76b9ed"></div>
<!-- tray -->
<svg class="a" style="left:1092px;top:744px" width="13" height="8" viewBox="0 0 13 8"><path d="M1 7L6.5 1.5L12 7" fill="none" stroke="#fff" stroke-width="1.3"/></svg>
<svg class="a" style="left:1115px;top:740px" width="16" height="16" viewBox="0 0 16 16"><defs><linearGradient id="vg" x1="0" y1="0" x2="1" y2="1"><stop offset="0" stop-color="#f8dede"/><stop offset="0.5" stop-color="#f2f2f2"/><stop offset="1" stop-color="#d8d8d8"/></linearGradient></defs><rect x="0" y="0" width="16" height="16" fill="#f0c0c0"/><rect x="1" y="1" width="14" height="14" fill="url(#vg)"/><path d="M3.2 3.6L7.6 13.2L12.8 3.4" fill="none" stroke="#d42a2a" stroke-width="1.5"/><path d="M3.6 3.6L7.4 12" stroke="#c02020" stroke-width="1"/></svg>
<svg class="a" style="left:1139px;top:740px" width="16" height="16" viewBox="0 0 16 16"><defs><linearGradient id="vg2" x1="0" y1="0" x2="1" y2="1"><stop offset="0" stop-color="#f8dede"/><stop offset="0.5" stop-color="#f2f2f2"/><stop offset="1" stop-color="#d8d8d8"/></linearGradient></defs><rect x="0" y="0" width="16" height="16" fill="#f0c0c0"/><rect x="1" y="1" width="14" height="14" fill="url(#vg2)"/><path d="M3.2 3.6L7.6 13.2L12.8 3.4" fill="none" stroke="#d42a2a" stroke-width="1.5"/><path d="M3.6 3.6L7.4 12" stroke="#c02020" stroke-width="1"/></svg>
<svg class="a" style="left:1163px;top:741px" width="17" height="15" viewBox="0 0 17 15"><g fill="none" stroke="#fff" stroke-width="1.1"><rect x="0.6" y="0.6" width="3.4" height="3.6"/><rect x="4.6" y="1.6" width="11.2" height="9"/><path d="M10.2 10.6V13.4M6.2 13.6H13.4M2.3 4.2V14.4"/></g></svg>
<svg class="a" style="left:1187px;top:740px" width="17" height="16" viewBox="0 0 17 16"><g fill="none" stroke="#fff" stroke-width="1.1"><path d="M0.5 5.5H3.5L7.5 1.5V14.5L3.5 10.5H0.5Z"/><path d="M10 5.5Q11.5 8 10 10.5M12.5 3.5Q15 8 12.5 12.5M14.5 1.5Q18 8 14.5 14.5"/></g></svg>
<div class="t ns" style="left:1213px;top:742px;font-size:11.5px;color:#fff">ENG</div>
<div class="t ns" style="left:1256px;top:734px;font-size:12px;color:#fff">9:22 AM</div>
<div class="t ns" style="left:1248px;top:751px;font-size:12px;color:#fff">26/03/2020</div>
<svg class="a" style="left:1324px;top:739px" width="27" height="25" viewBox="0 0 27 25"><path d="M1 1H17V14H9L7 16V14H1Z" fill="#fff"/><path d="M3.5 4.5H14M3.5 7.5H14M3.5 10.5H11" stroke="#191919" stroke-width="1"/><circle cx="16.6" cy="16.3" r="7.4" fill="#2b2b2b" stroke="#8a8a8a" stroke-width="0.9"/><text x="16.8" y="20.3" font-family="Liberation Sans" font-size="11.5" fill="#fff" text-anchor="middle" style="-webkit-text-stroke:0">3</text></svg>
<div class="a" style="left:1361px;top:728px;width:1px;height:40px;background:#5a5a5a"></div>

</body></html>
